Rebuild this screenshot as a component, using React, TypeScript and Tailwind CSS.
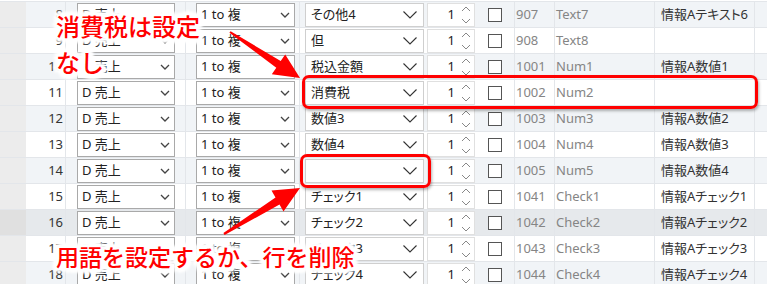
import React from "react";

type Row = {
  n: number;
  s3: string;
  id: string;
  name: string;
  info: string;
};

const rows: Row[] = [
  { n: 8, s3: "その他4", id: "907", name: "Text7", info: "情報Aテキスト6" },
  { n: 9, s3: "但", id: "908", name: "Text8", info: "" },
  { n: 10, s3: "税込金額", id: "1001", name: "Num1", info: "情報A数値1" },
  { n: 11, s3: "消費税", id: "1002", name: "Num2", info: "" },
  { n: 12, s3: "数値3", id: "1003", name: "Num3", info: "情報A数値2" },
  { n: 13, s3: "数値4", id: "1004", name: "Num4", info: "情報A数値3" },
  { n: 14, s3: "", id: "1005", name: "Num5", info: "情報A数値4" },
  { n: 15, s3: "チェック1", id: "1041", name: "Check1", info: "情報Aチェック1" },
  { n: 16, s3: "チェック2", id: "1042", name: "Check2", info: "情報Aチェック2" },
  { n: 17, s3: "チェック3", id: "1043", name: "Check3", info: "情報Aチェック3" },
  { n: 18, s3: "チェック4", id: "1044", name: "Check4", info: "情報Aチェック4" },
];

function SmallChevron() {
  return (
    <svg width="10" height="6" viewBox="0 0 10 6" className="shrink-0">
      <path d="M1 1 L5 5 L9 1" fill="none" stroke="#444" strokeWidth="1.3" />
    </svg>
  );
}

function BigChevron() {
  return (
    <svg width="14" height="8" viewBox="0 0 14 8" className="shrink-0">
      <path d="M0.5 0.5 L7 7 L13.5 0.5" fill="none" stroke="#333" strokeWidth="1.1" />
    </svg>
  );
}

function Spinner() {
  return (
    <svg width="10" height="20" viewBox="0 0 10 20" className="shrink-0">
      <path d="M1 6 L5 2 L9 6" fill="none" stroke="#888" strokeWidth="1" />
      <path d="M1 14 L5 18 L9 14" fill="none" stroke="#888" strokeWidth="1" />
    </svg>
  );
}

const glow =
  "[text-shadow:0_0_2px_#fff,2px_0_2px_#fff,-2px_0_2px_#fff,0_2px_2px_#fff,0_-2px_2px_#fff,2px_2px_2px_#fff,-2px_-2px_2px_#fff,2px_-2px_2px_#fff,-2px_2px_2px_#fff,4px_0_2px_#fff,-4px_0_2px_#fff,0_4px_2px_#fff,0_-4px_2px_#fff,3px_3px_2px_#fff,-3px_-3px_2px_#fff,3px_-3px_2px_#fff,-3px_3px_2px_#fff,5px_0_3px_#fff,-5px_0_3px_#fff,0_5px_3px_#fff,0_-5px_3px_#fff,4px_4px_3px_#fff,-4px_-4px_3px_#fff,4px_-4px_3px_#fff,-4px_4px_3px_#fff]";

export default function App() {
  return (
    <div className="relative w-[767px] h-[284px] overflow-hidden bg-white text-[13px] text-[#222] font-['Noto_Sans','Noto_Sans_CJK_JP',sans-serif] [font-feature-settings:'palt']">
      <div className="mt-[1px] border-t border-[#e3e6ea]">
        {rows.map((r) => {
          const hover = r.n === 16;
          const bg = hover ? "bg-[#e6e9ec]" : r.n % 2 === 0 ? "bg-[#f1f4f7]" : "bg-white";
          return (
            <div key={r.n} className={`flex h-[26px] border-b border-[#e3e6ea] whitespace-nowrap ${bg}`}>
              <div className={`w-[26px] shrink-0 ${hover ? "bg-[#e0e0e0]" : "bg-[#ececec]"}`} />
              <div className="w-[40px] shrink-0 flex items-center justify-end pr-[2px] border-r border-[#e3e6ea] text-[#333]">
                {r.n}
              </div>
              <div className="w-[120px] shrink-0 flex items-center pl-[11px] border-r border-[#e3e6ea]">
                <div className="w-[98px] h-[24px] bg-white border border-[#a9a9a9] flex items-center justify-between pl-[4px] pr-[4px]">
                  <span>D 売上</span>
                  <SmallChevron />
                </div>
              </div>
              <div className="w-[114px] shrink-0 flex items-center pl-[10px] border-r border-[#e3e6ea]">
                <div className="w-[99px] h-[24px] bg-white border border-[#a9a9a9] flex items-center justify-between pl-[4px] pr-[4px]">
                  <span>1 to 複</span>
                  <SmallChevron />
                </div>
              </div>
              <div className="w-[126px] shrink-0 flex items-center pl-[5px]">
                <div className="w-[119px] h-[24px] bg-white border border-[#cfcfcf] flex items-center justify-between pl-[5px] pr-[6px]">
                  <span>{r.s3}</span>
                  <BigChevron />
                </div>
              </div>
              <div className="w-[50px] shrink-0 flex items-center pl-[1px]">
                <div className="w-[48px] h-[24px] bg-white border border-[#e0e0e0] flex items-center justify-end gap-[6px] pr-[3px]">
                  <span>1</span>
                  <Spinner />
                </div>
              </div>
              <div className="w-[39px] shrink-0 flex items-center justify-center border-r border-[#e3e6ea]">
                <div className="w-[14px] h-[14px] bg-white border border-[#555]" />
              </div>
              <div className="w-[40px] shrink-0 flex items-center pl-[1px] border-r border-[#e3e6ea] text-[#858585]">
                {r.id}
              </div>
              <div className="w-[100px] shrink-0 flex items-center pl-[1px] border-r border-[#e3e6ea] text-[#858585]">
                {r.name}
              </div>
              <div className="w-[100px] shrink-0 flex items-center pl-[6px] border-r border-[#e3e6ea] text-[#333] overflow-hidden">
                {r.info}
              </div>
              <div className="flex-1" />
            </div>
          );
        })}
      </div>

      {/* red highlight boxes */}
      <div className="absolute left-[302px] top-[75px] w-[456px] h-[34px] border-[3px] border-[#ff0000] rounded-[7px] shadow-[1px_2px_3px_rgba(0,0,0,0.3)]" />
      <div className="absolute left-[300px] top-[154px] w-[131px] h-[34px] border-[3px] border-[#ff0000] rounded-[7px] shadow-[1px_2px_3px_rgba(0,0,0,0.3)]" />

      {/* arrows */}
      <svg className="absolute left-0 top-0" width="767" height="284" viewBox="0 0 767 284">
        <polygon
          points="229.4,32.8 276.3,67.7 271.8,74.3 300,78 285.2,54.5 280.7,61.1 230.6,31.2"
          fill="#ff0000"
        />
        <polygon
          points="224.6,235 279.5,204.5 283.5,211.4 300,188 271.5,190.6 275.5,197.5 223.4,233"
          fill="#ff0000"
        />
      </svg>

      {/* annotation texts */}
      <div
        className={`absolute left-[56px] top-[8px] text-[24px] leading-[36px] text-[#ff0000] font-medium font-['Noto_Sans_CJK_JP',sans-serif] [font-feature-settings:normal] ${glow}`}
      >
        消費税は設定
        <br />
        なし
      </div>
      <div
        className={`absolute left-[56px] top-[238px] text-[23px] leading-[36px] text-[#ff0000] font-medium font-['Noto_Sans_CJK_JP',sans-serif] [font-feature-settings:normal] whitespace-nowrap ${glow}`}
      >
        用語を設定するか、行を削除
      </div>
    </div>
  );
}
